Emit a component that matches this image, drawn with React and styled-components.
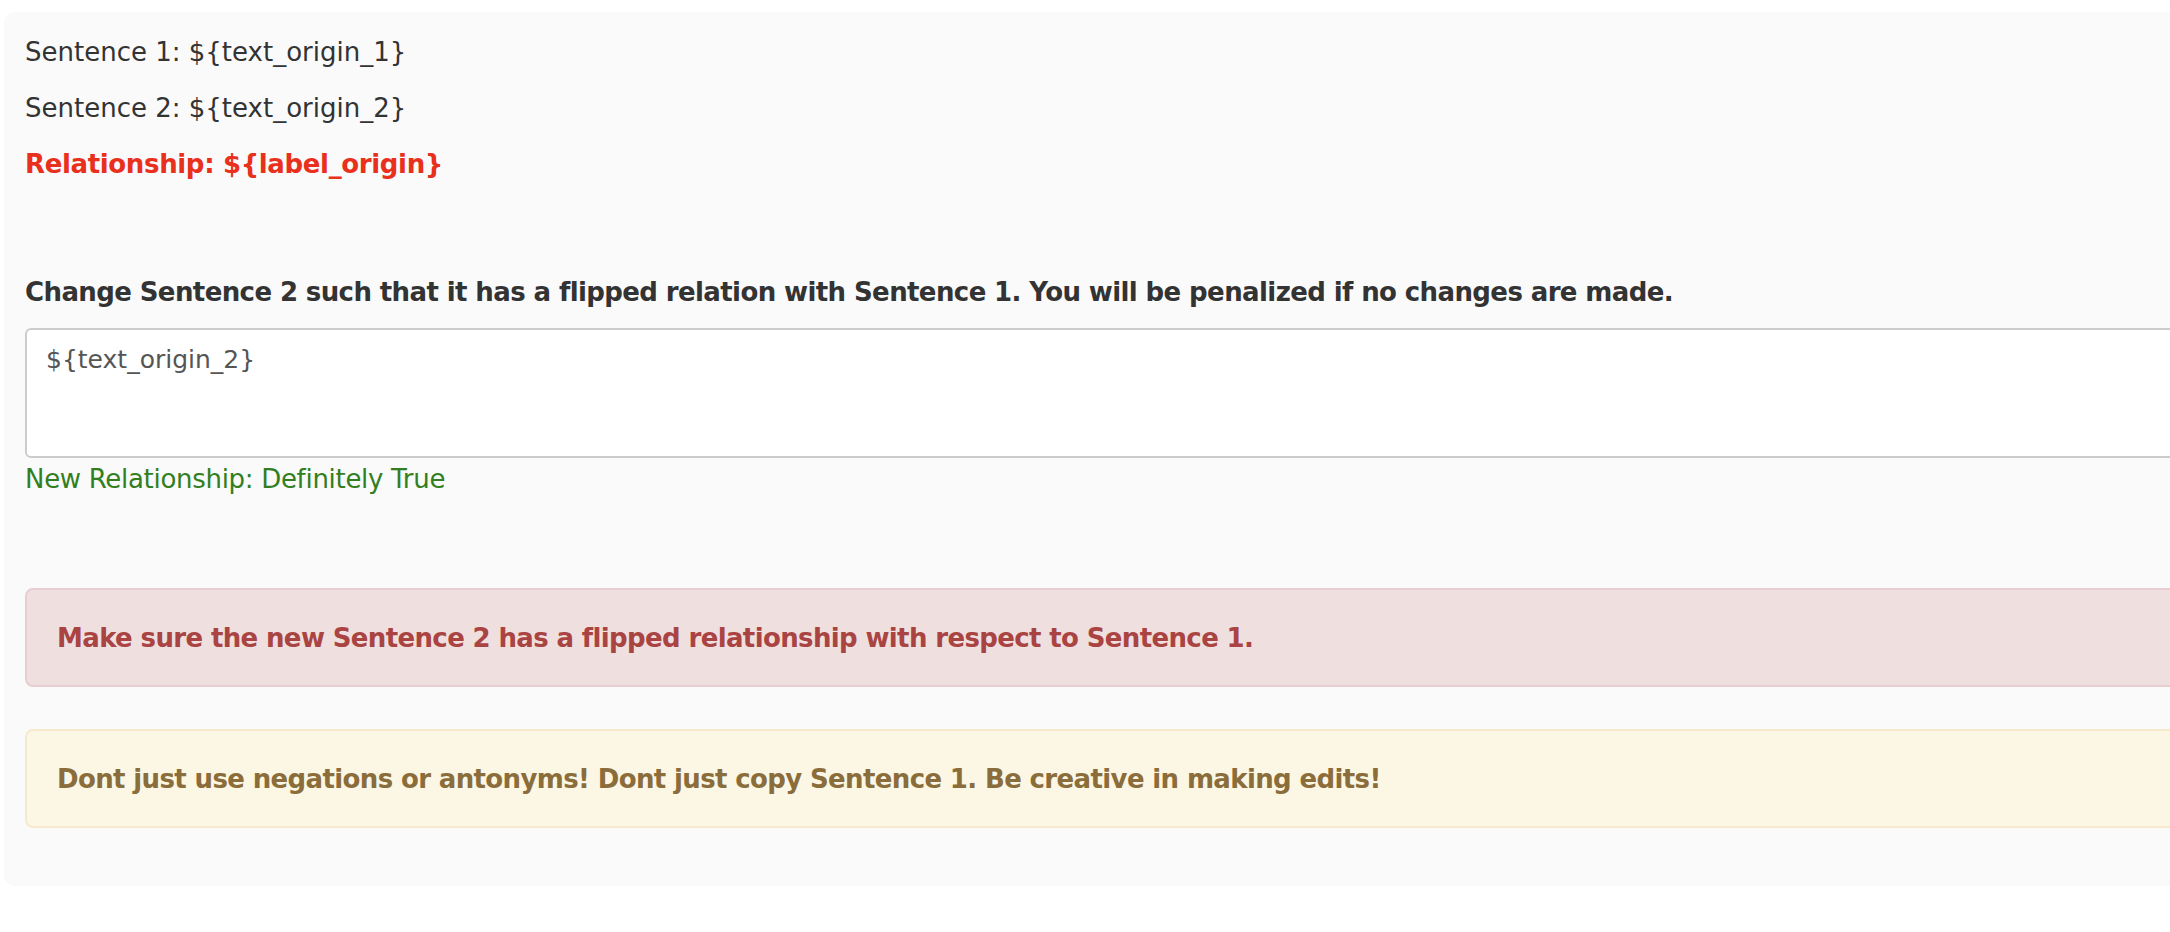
import React from "react";
import styled, { createGlobalStyle } from "styled-components";

const GlobalStyle = createGlobalStyle`
  html, body {
    margin: 0;
    padding: 0;
    background: #ffffff;
    overflow-x: hidden;
  }
  body {
    font-family: "DejaVu Sans", Verdana, sans-serif;
    color: #333333;
  }
`;

export default function App() {
  return (
    <>
      <GlobalStyle />
      <Panel>
        <Line>Sentence 1: {"${text_origin_1}"}</Line>
        <Line>Sentence 2: {"${text_origin_2}"}</Line>
        <Line tone="red" bold>Relationship: {"${label_origin}"}</Line>

        <Question>
          Change Sentence 2 such that it has a flipped relation with Sentence 1. You will be penalized if no changes are made.
        </Question>
        <Answer defaultValue={"${text_origin_2}"} />
        <NewLabel>New Relationship: Definitely True</NewLabel>

        <Alert kind="danger">
          Make sure the new Sentence 2 has a flipped relationship with respect to Sentence 1.
        </Alert>
        <Alert kind="warning">
          Dont just use negations or antonyms! Dont just copy Sentence 1. Be creative in making edits!
        </Alert>
      </Panel>
    </>
  );
}

const alertColors = {
  danger: { bg: "#f0dfdf", border: "#e8cdd2", text: "#a94442" },
  warning: { bg: "#fbf7e4", border: "#f7e9cc", text: "#8a6d3b" },
};

const Panel = styled.div`
  margin: 12px 0 46px 4px;
  width: 2220px;
  box-sizing: border-box;
  padding: 22px 0 58px 21px;
  background: #fafafa;
  border-radius: 10px;
  display: flex;
  flex-direction: column;
`;

const Line = styled.p`
  margin: 0 0 20px;
  font-size: 26px;
  line-height: 36px;
  font-weight: ${(p) => (p.bold ? 700 : 400)};
  letter-spacing: ${(p) => (p.bold ? "-0.35px" : "0")};
  color: ${(p) => (p.tone === "red" ? "#e8301c" : "#333333")};
`;

const Question = styled.div`
  margin: 72px 0 18px;
  font-size: 26px;
  line-height: 36px;
  font-weight: 700;
  color: #333333;
  letter-spacing: -0.6px;
`;

const Answer = styled.textarea`
  display: block;
  box-sizing: border-box;
  width: 100%;
  height: 130px;
  margin: 0;
  padding: 12px 19px;
  border: 2px solid #cccccc;
  border-radius: 6px;
  background: #ffffff;
  font-family: "DejaVu Sans", Verdana, sans-serif;
  font-size: 25px;
  line-height: 36px;
  color: #555555;
  resize: none;
  outline: none;
`;

const NewLabel = styled.div`
  margin: 3px 0 0;
  font-size: 26px;
  line-height: 36px;
  letter-spacing: -0.3px;
  color: #317f20;
`;

const Alert = styled.div`
  box-sizing: border-box;
  height: 99px;
  margin-top: ${(p) => (p.kind === "danger" ? "91px" : "42px")};
  padding: 0 30px;
  display: flex;
  align-items: center;
  border: 2px solid ${(p) => alertColors[p.kind].border};
  border-radius: 8px;
  background: ${(p) => alertColors[p.kind].bg};
  color: ${(p) => alertColors[p.kind].text};
  font-size: 26px;
  font-weight: 700;
  letter-spacing: -0.63px;
`;
